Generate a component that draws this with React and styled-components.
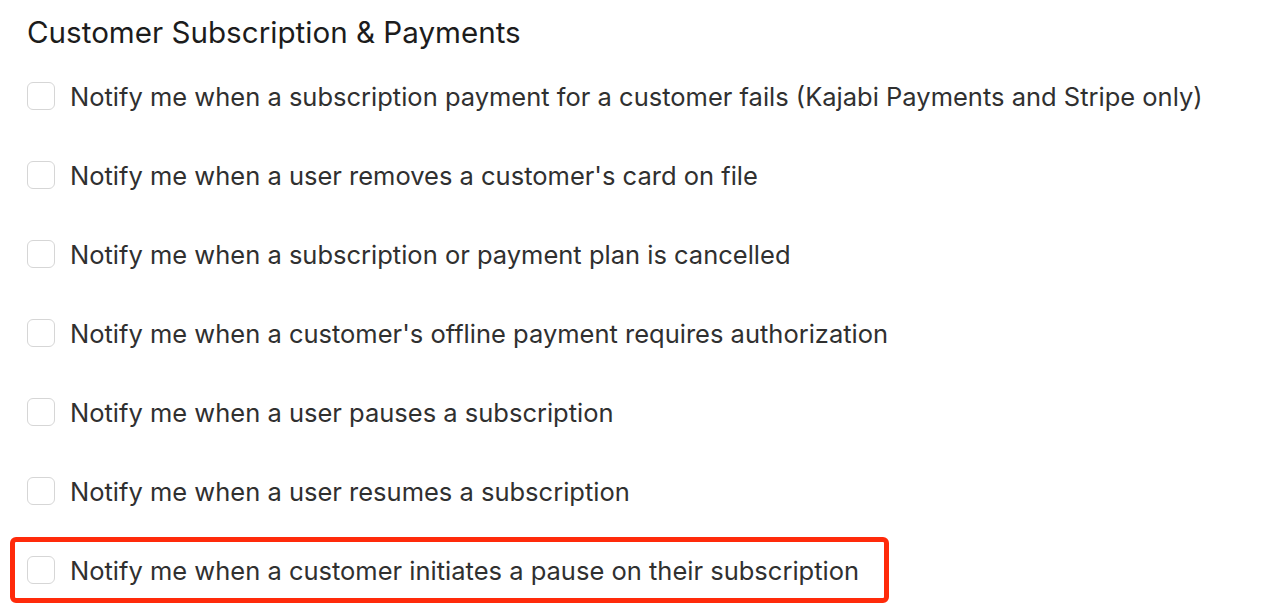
import React from 'react';
import styled, { createGlobalStyle } from 'styled-components';

const GlobalStyle = createGlobalStyle`
  body {
    margin: 0;
    background: #ffffff;
    font-family: Inter, "Noto Sans", sans-serif;
  }
`;

const Page = styled.div`
  padding: 14px 0 12px 15px;
`;

const Title = styled.h2`
  margin: 0 0 18px 12px;
  font-size: 29.6px;
  line-height: 36px;
  font-weight: 400;
  color: #1c1c1c;
`;

const List = styled.ul`
  list-style: none;
  margin: 0;
  padding: 0;
  display: flex;
  flex-direction: column;
  gap: 23px;
`;

const Row = styled.li`
  display: flex;
  align-items: center;
  gap: 15px;
  width: fit-content;
  height: 56px;
  padding: 0 25px 0 12px;
  border-radius: 1px;
  outline: ${(p) => (p.$highlight ? '5px solid #ff2a0a' : 'none')};
`;

const Box = styled.span`
  width: 28px;
  height: 28px;
  box-sizing: border-box;
  border: 1px solid #d6d6d6;
  border-radius: 6px;
  background: #fff;
  flex-shrink: 0;
`;

const Label = styled.span`
  font-size: 25.5px;
  color: #303030;
  white-space: nowrap;
`;

const options = [
  "Notify me when a subscription payment for a customer fails (Kajabi Payments and Stripe only)",
  "Notify me when a user removes a customer's card on file",
  'Notify me when a subscription or payment plan is cancelled',
  "Notify me when a customer's offline payment requires authorization",
  'Notify me when a user pauses a subscription',
  'Notify me when a user resumes a subscription',
  'Notify me when a customer initiates a pause on their subscription',
];

const App = () => (
  <>
    <GlobalStyle />
    <Page>
      <Title>Customer Subscription &amp; Payments</Title>
      <List>
        {options.map((text, i) => (
          <Row key={text} $highlight={i === options.length - 1}>
            <Box />
            <Label>{text}</Label>
          </Row>
        ))}
      </List>
    </Page>
  </>
);

export default App;
